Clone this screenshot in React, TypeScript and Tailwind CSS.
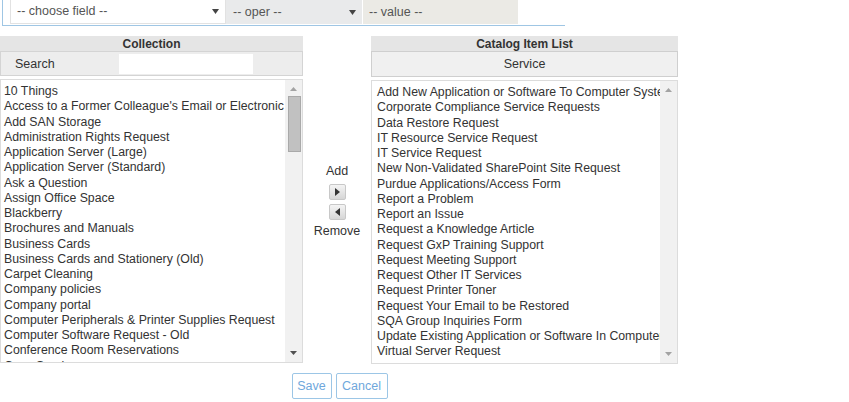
import React from "react";

const collection = [
  "10 Things",
  "Access to a Former Colleague's Email or Electronic Files",
  "Add SAN Storage",
  "Administration Rights Request",
  "Application Server (Large)",
  "Application Server (Standard)",
  "Ask a Question",
  "Assign Office Space",
  "Blackberry",
  "Brochures and Manuals",
  "Business Cards",
  "Business Cards and Stationery (Old)",
  "Carpet Cleaning",
  "Company policies",
  "Company portal",
  "Computer Peripherals & Printer Supplies Request",
  "Computer Software Request - Old",
  "Conference Room Reservations",
  "Copy Services",
  "Courier Services",
];

const catalog = [
  "Add New Application or Software To Computer Systems",
  "Corporate Compliance Service Requests",
  "Data Restore Request",
  "IT Resource Service Request",
  "IT Service Request",
  "New Non-Validated SharePoint Site Request",
  "Purdue Applications/Access Form",
  "Report a Problem",
  "Report an Issue",
  "Request a Knowledge Article",
  "Request GxP Training Support",
  "Request Meeting Support",
  "Request Other IT Services",
  "Request Printer Toner",
  "Request Your Email to be Restored",
  "SQA Group Inquiries Form",
  "Update Existing Application or Software In Computer Systems",
  "Virtual Server Request",
];

function Caret() {
  return (
    <svg width="7" height="5" viewBox="0 0 7 5">
      <path d="M0 0 L7 0 L3.5 5 Z" fill="#444" />
    </svg>
  );
}

function Arrow({ up, color }: { up: boolean; color: string }) {
  return (
    <svg width="7" height="4" viewBox="0 0 7 4">
      {up ? <path d="M0 4 L7 4 L3.5 0 Z" fill={color} /> : <path d="M0 0 L7 0 L3.5 4 Z" fill={color} />}
    </svg>
  );
}

function ListBox({ items, thumb, pl }: { items: string[]; thumb: boolean; pl: string }) {
  return (
    <div className="mt-[3px] flex h-[284px] border border-[#dcdcdc] bg-white">
      <div className={`flex-1 overflow-hidden whitespace-nowrap pt-[4px] ${pl}`}>
        {items.map((t) => (
          <div key={t} className="text-[12.3px] leading-[15.25px] text-[#333]">
            {t}
          </div>
        ))}
      </div>
      <div className="flex w-[17px] flex-col items-center bg-[#f1f1f1]">
        <div className="flex h-[16px] items-center justify-center pt-[2px]">
          <Arrow up color="#a3a3a3" />
        </div>
        {thumb ? (
          <div className="ml-[1px] h-[56px] w-[13px] border border-[#a9a9a9] bg-[#c1c1c1]" />
        ) : null}
        <div className="flex-1" />
        <div className="flex h-[16px] items-center justify-center pb-[2px]">
          <Arrow up={false} color={thumb ? "#505050" : "#a3a3a3"} />
        </div>
      </div>
    </div>
  );
}

function MoveBtn({ right }: { right: boolean }) {
  return (
    <div className="flex h-[16px] w-[17px] items-center justify-center rounded-[2px] border border-[#c8c8c8] bg-gradient-to-b from-[#f4f4f4] to-[#d6d6d6]">
      <svg width="5" height="8" viewBox="0 0 5 8">
        {right ? <path d="M0 0 L5 4 L0 8 Z" fill="#333" /> : <path d="M5 0 L0 4 L5 8 Z" fill="#333" />}
      </svg>
    </div>
  );
}

export default function App() {
  return (
    <div
      className="relative h-[402px] w-[849px] overflow-hidden bg-white text-[#333]"
      style={{ fontFamily: '"Liberation Sans", Arial, sans-serif' }}
    >
      <div className="ml-[2px] flex h-[26px] w-[563px] border-b border-l border-[#9fc6e4] pl-[7px]">
        <div className="flex h-[24px] w-[216px] items-center justify-between border border-t-0 border-[#e2e2e2] bg-white pl-[6px] pr-[6px] text-[12.5px] text-[#555]">
          <span>-- choose field --</span>
          <Caret />
        </div>
        <div className="flex h-[24px] w-[136px] items-center justify-between bg-[#e9eaeb] pl-[7px] pr-[6px] text-[12.5px] text-[#555]">
          <span>-- oper --</span>
          <Caret />
        </div>
        <div className="ml-[1px] flex h-[24px] w-[155px] items-center bg-[#ebeae5] pl-[6px] text-[12.5px] text-[#555]">
          <span>-- value --</span>
        </div>
      </div>

      <div className="mt-[10px] flex w-[678px]">
        <div className="w-[303px]">
          <div className="h-[15px] bg-[#e5e5e5] pt-[1px] text-center text-[12px] font-bold leading-[15px] text-[#333]">
            Collection
          </div>
          <div className="flex h-[25px] items-center border border-[#d4d4d4] bg-[#ededed]">
            <div className="w-[118px] pl-[14px] pt-[1px] text-[12.5px] text-[#333]">Search</div>
            <input className="h-[20px] w-[134px] bg-white outline-none" />
          </div>
          <ListBox items={collection} thumb pl="pl-[3px]" />
        </div>

        <div className="flex w-[68px] flex-col items-center pt-[128px] text-[12.5px] text-[#333]">
          <div className="leading-[15px]">Add</div>
          <div className="mt-[5px]">
            <MoveBtn right />
          </div>
          <div className="mt-[4px]">
            <MoveBtn right={false} />
          </div>
          <div className="mt-[4px] leading-[15px]">Remove</div>
        </div>

        <div className="w-[307px]">
          <div className="h-[15px] bg-[#e5e5e5] pt-[1px] text-center text-[12px] font-bold leading-[15px] text-[#333]">
            Catalog Item List
          </div>
          <div className="flex h-[26px] items-center justify-center border border-[#cfcfcf] bg-[#f0f0f0] text-[12.5px] text-[#333]">
            Service
          </div>
          <ListBox items={catalog} thumb={false} pl="pl-[5px]" />
        </div>
      </div>

      <div className="mt-[9px] flex w-[678px] justify-center gap-[4px] pl-[1px]">
        <button className="h-[26px] w-[40px] rounded-[2px] border border-[#9cc6e6] bg-white text-[12.5px] text-[#6fa8dc]">
          Save
        </button>
        <button className="h-[26px] w-[52px] rounded-[2px] border border-[#9cc6e6] bg-white text-[12.5px] text-[#6fa8dc]">
          Cancel
        </button>
      </div>
    </div>
  );
}
